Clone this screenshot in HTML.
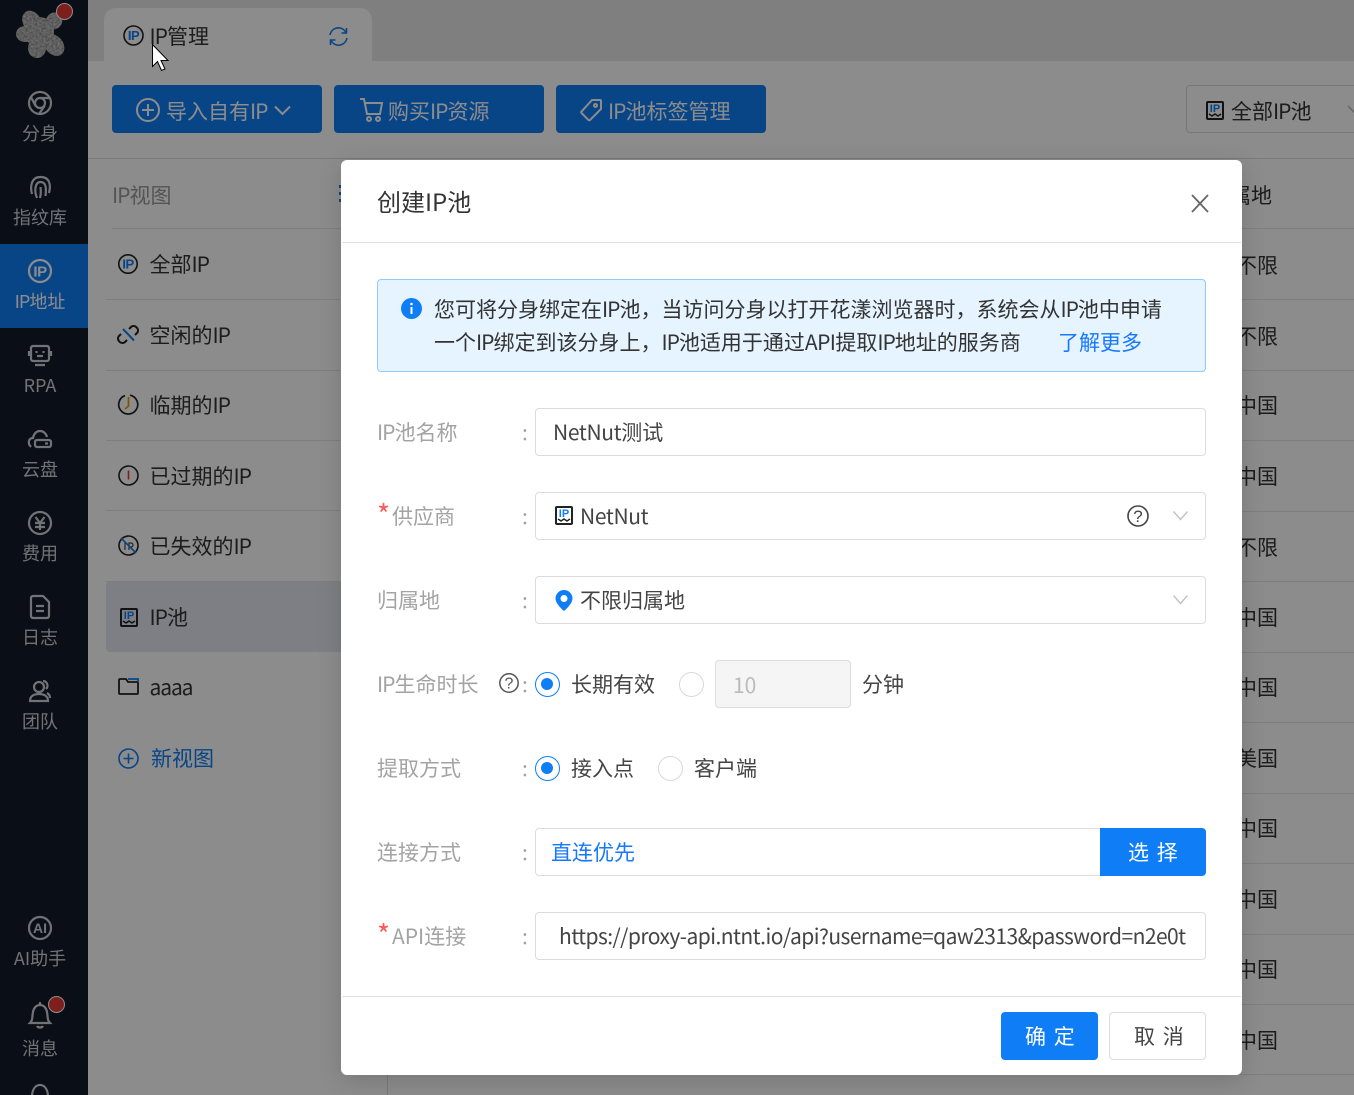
<!DOCTYPE html>
<html lang="zh-CN"><head><meta charset="utf-8"><title>创建IP池</title>
<style>
*{box-sizing:border-box;margin:0;padding:0}
html,body{width:1354px;height:1095px;overflow:hidden;background:#fff}
body{position:relative;font-family:"Noto Sans CJK SC","Liberation Sans",sans-serif;font-size:21px;color:#333}
.a,.t{position:absolute}
.t{white-space:nowrap;line-height:32px;height:32px}
u{text-decoration:none;letter-spacing:-1px}
svg{position:absolute;overflow:visible;fill:none}
#top{left:88px;top:0;width:1266px;height:61px;background:#e8e8e8}
#tab{left:104px;top:8px;width:268px;height:53px;background:#fff;border-radius:12px 12px 0 0}
#side{left:0;top:0;width:88px;height:1095px;background:#121a2a}
#act{left:0;top:244px;width:88px;height:84px;background:#0f7ef6}
.s{left:0;width:80px;text-align:center;font-size:18px;color:#ced2d8;line-height:28px;height:28px}
.si{stroke:#ced2d8;stroke-width:2.2}
.b{top:85px;height:48px;width:210px;background:#0f7ef6;border-radius:4px}
.bt{color:#fff;top:95px}
.bi{stroke:#fff;stroke-width:2}
.l{left:106px;height:1px;width:234px;background:#e6e6e6}
.r{left:1242px;width:112px;height:1px;background:#e6e6e6}
.c{left:1236px}
.li{left:149.500px}
#ov{left:0;top:0;width:1354px;height:1095px;background:rgba(0,0,0,.45)}
#m{left:341px;top:160px;width:901px;height:915px;background:#fff;border-radius:6px;box-shadow:0 6px 24px rgba(0,0,0,.15)}
.hl{height:1px;background:#e0e0e0}
.in{left:535px;width:671px;height:48px;border:1px solid #dcdcdc;border-radius:4px;background:#fff}
.lb{left:377px;color:#a3a3a3}
.co{left:522px;color:#a3a3a3}
.st{left:377px;color:#ff5a5a;font-size:28px}
.v{color:#444}
.sp{word-spacing:3px}
.ic{font-size:13px;font-weight:700;letter-spacing:-.5px;fill:#0f7ef6;font-family:"Liberation Sans",sans-serif}
.rad{width:25px;height:25px;border-radius:50%;border:1px solid #d9d9d9;background:#fff}
.on{border:1.500px solid #0f7ef6}
.on:after{content:"";position:absolute;left:5px;top:5px;width:12px;height:12px;border-radius:50%;background:#0f7ef6}
</style></head><body>

<div class="a" id="top"></div>
<div class="a" id="tab"></div>
<svg style="left:123px;top:25px" width="21" height="21"><circle cx="10.500" cy="10.500" r="9.500" stroke="#222" stroke-width="1.600"/><text class="ic" x="10.500" y="15" text-anchor="middle">IP</text></svg>
<div class="t" style="left:149.500px;top:20px"><u>IP</u>管理</div>
<svg style="left:329px;top:27px" width="19" height="19" stroke="#0f7ef6" stroke-width="1.600"><path d="M1 8a8.500 8.500 0 0 1 15-4l1.500 2M17.500 1v5h-5M18 11a8.500 8.500 0 0 1-15 4l-1.500-2M1.500 18v-5h5"/></svg>

<div class="a" id="side"></div>
<div class="a" id="act"></div>
<svg style="left:16px;top:10px" width="50" height="48"><defs><filter id="n" x="0" y="0" width="100%" height="100%"><feTurbulence type="fractalNoise" baseFrequency=".5" numOctaves="2" seed="4"/><feColorMatrix values="0 0 0 0 .75 0 0 0 0 .75 0 0 0 0 .75 1.400 0 0 0 -.35"/><feComposite in2="SourceAlpha" operator="in"/><feMerge><feMergeNode in="SourceGraphic"/><feMergeNode/></feMerge></filter></defs><g fill="#888" filter="url(#n)"><ellipse cx="16" cy="12" rx="9" ry="12" transform="rotate(-30 16 12)"/><ellipse cx="38" cy="11" rx="8" ry="9" transform="rotate(40 38 11)"/><ellipse cx="38" cy="35" rx="9" ry="12" transform="rotate(-40 38 35)"/><ellipse cx="21" cy="38" rx="9" ry="10"/><ellipse cx="9" cy="24" rx="9" ry="8"/><circle cx="23" cy="22" r="15"/></g></svg>
<div class="a" style="left:56px;top:3px;width:17px;height:17px;border-radius:50%;background:#e53935;border:1.500px solid #fff"></div>

<svg class="si" style="left:28px;top:91px" width="24" height="24"><circle cx="12" cy="12" r="11"/><circle cx="12" cy="12" r="5"/><path d="M12 7h10M7.500 15L3 6M16.500 15L11 23"/></svg>
<div class="a s" style="top:119px">分身</div>
<svg class="si" style="left:30px;top:175px" width="21" height="24" stroke-width="2"><path d="M2 19C0 12 1 2 10.500 2S21 10 19 18M7 23C4 16 5 7 10.500 7s6 6 5 14M10.500 12c.5 4 .3 8-.5 11"/></svg>
<div class="a s" style="top:203px">指纹库</div>
<svg style="left:28px;top:259px" width="24" height="24"><circle cx="12" cy="12" r="11" stroke="#fff" stroke-width="2.200"/><text x="12" y="17.500" text-anchor="middle" font-size="15" font-weight="700" letter-spacing="-.5" fill="#fff" font-family="Liberation Sans">IP</text></svg>
<div class="a s" style="top:287px;color:#fff"><u>IP</u>地址</div>
<svg class="si" style="left:29px;top:344px" width="22" height="22"><rect x="2" y="2" width="18" height="15" rx="2"/><path d="M0 7v5M22 7v5M6 21h10M7.500 7v2M14.500 7v2M8 12h6"/></svg>
<div class="a s" style="top:371px">RPA</div>
<svg class="si" style="left:28px;top:430px" width="24" height="19"><path d="M3 17C-1 13 1 8 5 8 6 3 9 1 12 1s6 2 7 6"/><rect x="7" y="10" width="16" height="7" rx="2"/><path d="M17 13.500h3"/></svg>
<div class="a s" style="top:455px">云盘</div>
<svg class="si" style="left:28px;top:511px" width="24" height="24"><circle cx="12" cy="12" r="11"/><path d="M7.500 6l4.500 6 4.500-6M7 12h10M7 16h10M12 12v7"/></svg>
<div class="a s" style="top:539px">费用</div>
<svg class="si" style="left:30px;top:595px" width="20" height="24"><path d="M1 3a2 2 0 0 1 2-2h10l6 6v14a2 2 0 0 1-2 2H3a2 2 0 0 1-2-2zM6 11h8M6 16h8"/></svg>
<div class="a s" style="top:623px">日志</div>
<svg class="si" style="left:29px;top:680px" width="22" height="22" stroke-width="2"><circle cx="10" cy="7" r="5"/><path d="M1 21c0-5 4-7 9-7s9 2 9 7zM14 1c4 0 6 5 3 8M18 13c2 1 3 3 3 5"/></svg>
<div class="a s" style="top:707px">团队</div>
<svg class="si" style="left:28px;top:916px" width="24" height="24"><circle cx="12" cy="12" r="11"/><text x="12" y="17" text-anchor="middle" font-size="14" font-weight="700" fill="#ced2d8" stroke="none" font-family="Liberation Sans">AI</text></svg>
<div class="a s" style="top:944px">AI助手</div>
<svg class="si" style="left:28px;top:1001px" width="24" height="28"><path d="M12 1v3M2 22c3-3 2-6 3-11s4-7 7-7 6 2 7 7 0 8 3 11zM9 25c1 2 5 2 6 0"/></svg>
<div class="a" style="left:48px;top:996px;width:17px;height:17px;border-radius:50%;background:#e53935;border:1.500px solid #fff"></div>
<div class="a s" style="top:1034px">消息</div>
<svg class="si" style="left:28px;top:1084px" width="24" height="14"><path d="M4 11C5 3 9 1 12 1s7 2 8 10"/></svg>

<div class="a b" style="left:112px"></div><div class="a b" style="left:334px"></div><div class="a b" style="left:556px"></div>
<svg class="bi" style="left:136px;top:98px" width="24" height="24"><circle cx="12" cy="12" r="11"/><path d="M12 6v12M6 12h12"/></svg>
<div class="t bt" style="left:166px">导入自有<u>IP</u></div>
<svg class="bi" style="left:274px;top:105px" width="17" height="11"><path d="M1 1.500l7.500 7.500L16 1.500"/></svg>
<svg class="bi" style="left:360px;top:98px" width="23" height="24"><path d="M0 1h4l3 15h13l2-11H5"/><circle cx="9" cy="21" r="2"/><circle cx="18" cy="21" r="2"/></svg>
<div class="t bt" style="left:388px">购买<u>IP</u>资源</div>
<svg class="bi" style="left:580px;top:99px" width="22" height="23"><path d="M12 1h8a1 1 0 0 1 1 1v8L10 21a1 1 0 0 1-1.500 0L1.500 14a1 1 0 0 1 0-1.500z"/><circle cx="15.500" cy="6.500" r="1.500"/></svg>
<div class="t bt" style="left:608px"><u>IP</u>池标签管理</div>
<div class="a" style="left:1186px;top:85px;width:190px;height:48px;border:1px solid #d9d9d9;border-radius:4px"></div>
<svg style="left:1206px;top:101px" width="18" height="20"><rect x="1" y="1" width="16" height="17" rx="1" stroke="#222" stroke-width="2"/><path d="M3 13l3 2 3-2 3 2 3-2" stroke="#222" stroke-width="1.500"/><text x="9" y="11" text-anchor="middle" font-size="11" font-weight="700" fill="#0f7ef6" font-family="Liberation Sans">IP</text></svg>
<div class="t" style="left:1231px;top:95px">全部<u>IP</u>池</div>
<svg style="left:1348px;top:105px" width="12" height="10" stroke="#bbb" stroke-width="1.500"><path d="M0 1l7 7 7-7"/></svg>
<div class="a" style="left:88px;top:158px;width:1266px;height:1px;background:#dedede"></div>
<div class="a" style="left:387px;top:1075px;width:1px;height:20px;background:#dedede"></div>

<div class="t" style="left:112px;top:179px;color:#999"><u>IP</u>视图</div>
<div class="a" style="left:339px;top:185px;width:2px;height:17px;background:repeating-linear-gradient(#0f7ef6 0 3px,transparent 3px 7px)"></div>
<div class="a" style="left:106px;top:581px;width:240px;height:71px;background:#e3e8f0;border-radius:4px"></div>
<div class="a l" style="top:228px;left:112px"></div><div class="a l" style="top:299px"></div><div class="a l" style="top:370px"></div><div class="a l" style="top:440px"></div><div class="a l" style="top:510px"></div><div class="a l" style="top:581px"></div>
<svg style="left:118px;top:254px" width="20" height="20"><circle cx="10" cy="10" r="9.200" stroke="#222" stroke-width="1.600"/><text class="ic" x="10" y="14.500" text-anchor="middle">IP</text></svg>
<div class="t li" style="top:248px">全部<u>IP</u></div>
<svg style="left:118px;top:324px" width="20" height="21" stroke="#222" stroke-width="2"><path d="M11 5l2.500-2.500a4.500 4.500 0 0 1 6 6L17 11M9 16l-2.500 2.500a4.500 4.500 0 0 1-6-6L3 10"/><path d="M5 5l11 11.500" stroke="#0f7ef6"/></svg>
<div class="t li" style="top:319px">空闲的<u>IP</u></div>
<svg style="left:118px;top:394px" width="21" height="21"><path d="M12 1.200A9.500 9.500 0 1 1 7 1.600" stroke="#222" stroke-width="1.700"/><path d="M10.500 3v9l-3.500 3" stroke="#e69a00" stroke-width="1.700"/></svg>
<div class="t li" style="top:389px">临期的<u>IP</u></div>
<svg style="left:118px;top:465px" width="21" height="21"><circle cx="10.500" cy="10.500" r="9.500" stroke="#222" stroke-width="1.600"/><path d="M10.500 5.500v9" stroke="#e53935" stroke-width="1.600"/></svg>
<div class="t li" style="top:460px">已过期的<u>IP</u></div>
<svg style="left:118px;top:535px" width="21" height="21"><circle cx="10.500" cy="10.500" r="9.500" stroke="#222" stroke-width="1.600"/><path d="M7 15V8M11 15V8h2a2 2 0 0 1 0 4h-2" stroke="#444" stroke-width="1.200"/><path d="M3 3l15 15" stroke="#0f7ef6" stroke-width="1.600"/></svg>
<div class="t li" style="top:530px">已失效的<u>IP</u></div>
<svg style="left:120px;top:608px" width="18" height="20"><rect x="1" y="1" width="16" height="17" rx="1" stroke="#222" stroke-width="2"/><path d="M3 13l3 2 3-2 3 2 3-2" stroke="#222" stroke-width="1.500"/><text x="9" y="11" text-anchor="middle" font-size="11" font-weight="700" fill="#0f7ef6" font-family="Liberation Sans">IP</text></svg>
<div class="t li" style="top:601px"><u>IP</u>池</div>
<svg style="left:118px;top:677px" width="21" height="19"><path d="M1 3a1 1 0 0 1 1-1h6l2 3h9a1 1 0 0 1 1 1v10a1 1 0 0 1-1 1H2a1 1 0 0 1-1-1z" stroke="#222" stroke-width="1.800"/><path d="M10 2h10v3" stroke="#0f7ef6" stroke-width="1.800"/></svg>
<div class="t li" style="top:671px;letter-spacing:-1.100px">aaaa</div>
<svg style="left:118px;top:748px" width="21" height="21" stroke="#0f7ef6" stroke-width="1.600"><circle cx="10.500" cy="10.500" r="9.500"/><path d="M10.500 5.500v10M5.500 10.500h10"/></svg>
<div class="t" style="left:151px;top:742px;color:#0f7ef6">新视图</div>

<div class="t" style="left:1209px;top:179px">归属地</div>
<div class="a r" style="top:228px"></div><div class="a r" style="top:299px"></div><div class="a r" style="top:370px"></div><div class="a r" style="top:440px"></div><div class="a r" style="top:511px"></div><div class="a r" style="top:581px"></div><div class="a r" style="top:652px"></div><div class="a r" style="top:722px"></div><div class="a r" style="top:793px"></div><div class="a r" style="top:863px"></div><div class="a r" style="top:934px"></div><div class="a r" style="top:1004px"></div><div class="a" style="left:388px;top:1074px;width:966px;height:1px;background:#e6e6e6"></div>
<div class="t c" style="top:249px">不限</div><div class="t c" style="top:320px">不限</div><div class="t c" style="top:389px">中国</div><div class="t c" style="top:460px">中国</div><div class="t c" style="top:531px">不限</div><div class="t c" style="top:601px">中国</div><div class="t c" style="top:671px">中国</div><div class="t c" style="top:742px">美国</div><div class="t c" style="top:812px">中国</div><div class="t c" style="top:883px">中国</div><div class="t c" style="top:953px">中国</div><div class="t c" style="top:1024px">中国</div>

<div class="a" id="ov"></div>
<svg style="left:152px;top:44px" width="18" height="27"><path d="M.5.500v22l5-5 4 9 3.500-1.500-4-8.500h7z" fill="#fff" stroke="#000" stroke-width="1"/></svg>

<div class="a" id="m"></div>
<div class="t" style="left:377px;top:185px;font-size:24px;color:#333">创建IP池</div>
<svg style="left:1191px;top:194px" width="18" height="18" stroke="#666" stroke-width="1.800"><path d="M1 1l16 17M17 1L1 18"/></svg>
<div class="a hl" style="left:342px;top:242px;width:899px"></div>

<div class="a" style="left:377px;top:279px;width:829px;height:93px;background:#e6f4ff;border:1px solid #91caff;border-radius:4px"></div>
<svg style="left:401px;top:298px" width="21" height="21"><circle cx="10.500" cy="10.500" r="10.500" fill="#0f7ef6"/><path d="M10.500 9v7" stroke="#fff" stroke-width="2"/><circle cx="10.500" cy="6" r="1.300" fill="#fff"/></svg>
<div class="t" style="left:434px;top:293px">您可将分身绑定在<u>IP</u>池，当访问分身以打开花漾浏览器时，系统会从<u>IP</u>池中申请</div>
<div class="t" style="left:434px;top:326px">一个<u>IP</u>绑定到该分身上，<u>IP</u>池适用于通过<u style="letter-spacing:-.6px">API</u>提取<u>IP</u>地址的服务商</div>
<div class="t" style="left:1058px;top:326px;color:#1677ff">了解更多</div>

<div class="t lb" style="top:416px"><u>IP</u>池名称</div><div class="t co" style="top:416px">:</div>
<div class="a in" style="top:408px"></div><div class="t v" style="left:553px;top:416px"><u style="letter-spacing:-.35px">NetNut</u>测试</div>

<div class="t st" style="top:498px">*</div><div class="t lb" style="left:392px;top:500px">供应商</div><div class="t co" style="top:500px">:</div>
<div class="a in" style="top:492px"></div>
<svg style="left:555px;top:506px" width="18" height="20"><rect x="1" y="1" width="16" height="17" rx="1" stroke="#222" stroke-width="2"/><path d="M3 13l3 2 3-2 3 2 3-2" stroke="#222" stroke-width="1.500"/><text x="9" y="11" text-anchor="middle" font-size="11" font-weight="700" fill="#0f7ef6" font-family="Liberation Sans">IP</text></svg>
<div class="t v" style="left:580px;top:500px;letter-spacing:-.35px">NetNut</div>
<svg style="left:1127px;top:505px" width="22" height="22"><circle cx="11" cy="11" r="10" stroke="#444" stroke-width="1.600"/><text x="11" y="17" text-anchor="middle" font-size="17" fill="#444" font-family="Liberation Sans">?</text></svg>
<svg style="left:1173px;top:511px" width="15" height="10" stroke="#c4c4c4" stroke-width="1.500"><path d="M.5.500l7 8 7-8"/></svg>

<div class="t lb" style="top:584px">归属地</div><div class="t co" style="top:584px">:</div>
<div class="a in" style="top:576px"></div>
<svg style="left:555px;top:590px" width="18" height="22"><path d="M9 0a8.500 8.500 0 0 1 8.500 8.500C17.500 14 9 21 9 21S.5 14 .5 8.500A8.500 8.500 0 0 1 9 0z" fill="#0f7ef6"/><circle cx="9" cy="8.500" r="3.500" fill="#fff"/></svg>
<div class="t v" style="left:580px;top:584px">不限归属地</div>
<svg style="left:1173px;top:595px" width="15" height="10" stroke="#c4c4c4" stroke-width="1.500"><path d="M.5.500l7 8 7-8"/></svg>

<div class="t lb" style="top:668px"><u>IP</u>生命时长</div>
<svg style="left:499px;top:673px" width="20" height="20"><circle cx="10" cy="10" r="9.200" stroke="#555" stroke-width="1.500"/><text x="10" y="15.500" text-anchor="middle" font-size="16" fill="#555" font-family="Liberation Sans">?</text></svg>
<div class="t co" style="top:668px">:</div>
<div class="a rad on" style="left:535px;top:672px"></div><div class="t v" style="left:571px;top:668px">长期有效</div>
<div class="a rad" style="left:679px;top:672px"></div>
<div class="a" style="left:715px;top:660px;width:136px;height:48px;background:#f5f5f5;border:1px solid #dcdcdc;border-radius:4px"></div>
<div class="t" style="left:733px;top:669px;color:#bbb">10</div>
<div class="t v" style="left:862px;top:668px">分钟</div>

<div class="t lb" style="top:752px">提取方式</div><div class="t co" style="top:752px">:</div>
<div class="a rad on" style="left:535px;top:756px"></div><div class="t v" style="left:571px;top:752px">接入点</div>
<div class="a rad" style="left:658px;top:756px"></div><div class="t v" style="left:694px;top:752px">客户端</div>

<div class="t lb" style="top:836px">连接方式</div><div class="t co" style="top:836px">:</div>
<div class="a in" style="top:828px;width:570px;border-radius:4px 0 0 4px"></div>
<div class="t" style="left:551px;top:836px;color:#1677ff">直连优先</div>
<div class="a" style="left:1100px;top:828px;width:106px;height:48px;background:#0f7ef6;border-radius:0 4px 4px 0"></div>
<div class="t sp" style="left:1128px;top:836px;color:#fff">选 择</div>

<div class="t st" style="top:918px">*</div><div class="t lb" style="left:392px;top:920px">API连接</div><div class="t co" style="top:920px">:</div>
<div class="a in" style="top:912px"></div>
<div class="t v" style="left:559px;top:920px;letter-spacing:-.55px">https://proxy-api.ntnt.io/api?username=qaw2313&amp;password=n2e0t</div>

<div class="a hl" style="left:342px;top:996px;width:899px"></div>
<div class="a" style="left:1001px;top:1012px;width:97px;height:48px;background:#0f7ef6;border-radius:4px"></div>
<div class="t sp" style="left:1025px;top:1020px;color:#fff">确 定</div>
<div class="a" style="left:1109px;top:1012px;width:97px;height:48px;background:#fff;border:1px solid #dcdcdc;border-radius:4px"></div>
<div class="t v sp" style="left:1134px;top:1020px">取 消</div>
</body></html>
